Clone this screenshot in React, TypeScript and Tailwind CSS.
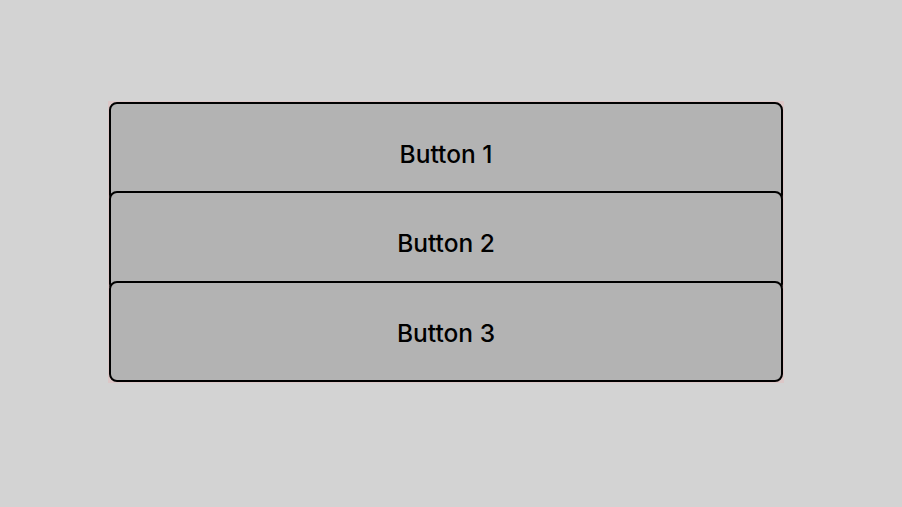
export default function App() {
  const items = ["Button 1", "Button 2", "Button 3"];
  return (
    <div className="min-h-screen w-full bg-[#d3d3d3] pt-[101px] pl-[108px]" style={{ fontFamily: "Inter, 'Liberation Sans', sans-serif" }}>
      <div className="w-[676px] bg-[#dcc7c7] px-[1px] py-[1px] flex flex-col">
        {items.map((t, i) => (
          <button
            key={t}
            className={`h-[101px] w-full rounded-[8px] border-2 border-black bg-[#b3b3b3] pt-[3px] text-[24.5px] font-medium text-black flex items-center justify-center ${i === 1 ? "-mt-[12px]" : ""} ${i === 2 ? "-mt-[11px]" : ""}`}
          >
            {t}
          </button>
        ))}
      </div>
    </div>
  );
}
